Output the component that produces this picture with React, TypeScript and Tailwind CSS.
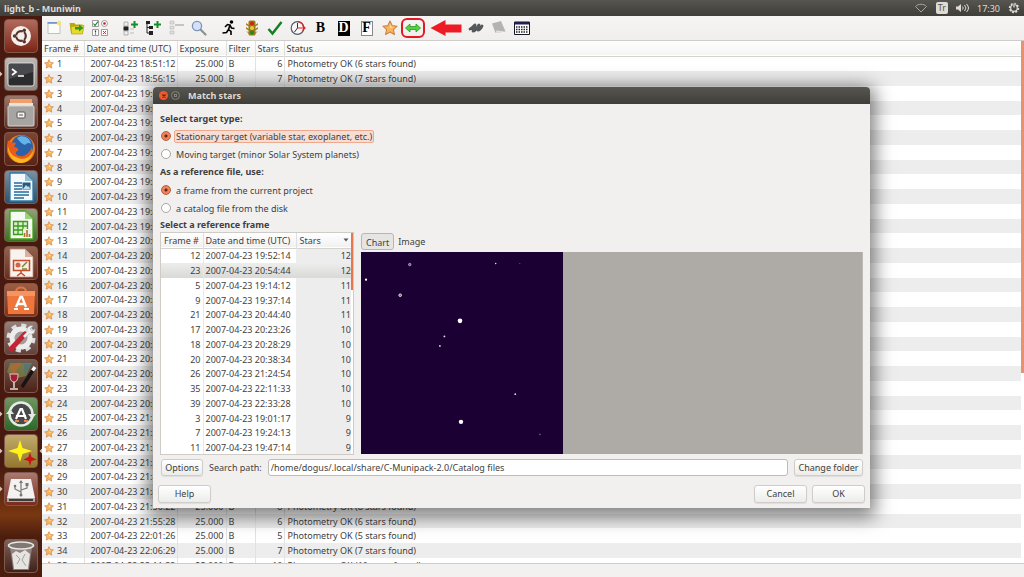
import type { ReactNode } from "react";

type Frame = [number, string, number];

const frames: Frame[] = [
  [1, "18:51:12", 6], [2, "18:56:15", 7], [3, "19:01:17", 9], [4, "19:09:08", 7],
  [5, "19:14:12", 11], [6, "19:19:12", 8], [7, "19:24:13", 9], [8, "19:32:10", 8],
  [9, "19:37:14", 11], [10, "19:42:12", 8], [11, "19:47:14", 9], [12, "19:52:14", 12],
  [13, "20:03:11", 8], [14, "20:08:14", 7], [15, "20:13:17", 8], [16, "20:18:22", 7],
  [17, "20:23:26", 10], [18, "20:28:29", 10], [19, "20:33:31", 8], [20, "20:38:34", 10],
  [21, "20:44:40", 11], [22, "20:49:42", 8], [23, "20:54:44", 12], [24, "20:59:48", 7],
  [25, "21:19:50", 8], [26, "21:24:54", 10], [27, "21:30:01", 7], [28, "21:35:06", 8],
  [29, "21:40:12", 6], [30, "21:45:18", 7], [31, "21:50:22", 8], [32, "21:55:28", 6],
  [33, "22:01:26", 5], [34, "22:06:29", 7], [35, "22:11:33", 10],
];

const references: Frame[] = [
  [12, "19:52:14", 12], [23, "20:54:44", 12], [5, "19:14:12", 11], [9, "19:37:14", 11],
  [21, "20:44:40", 11], [17, "20:23:26", 10], [18, "20:28:29", 10], [20, "20:38:34", 10],
  [26, "21:24:54", 10], [35, "22:11:33", 10], [39, "22:33:28", 10], [3, "19:01:17", 9],
  [7, "19:24:13", 9], [11, "19:47:14", 9],
];

const rowHeight = (i: number) => (i % 4 === 3 ? "h-[14px]" : "h-[15px]");

const STAR = "M8 1l2.1 4.6 5 .6-3.7 3.4 1 5L8 12.1 3.6 14.6l1-5L.9 6.2l5-.6z";

function Star({ className }: { className: string }) {
  return (
    <svg viewBox="0 0 16 16" className={className} aria-hidden="true">
      <path d={STAR} fill="#f9b45c" stroke="#cf8446" strokeWidth="1.1" strokeLinejoin="round" />
      <path d="M8 3.5l1.2 3 3 .5-4.2 1z" fill="#ffe0a8" />
    </svg>
  );
}

function Letter({ char, dark, boxed }: { char: string; dark?: boolean; boxed?: boolean }) {
  return (
    <span
      className={
        "flex h-[15px] w-3 items-center justify-center font-['Liberation_Serif',serif] text-[14px] leading-none font-bold " +
        (dark ? "bg-black text-white" : boxed ? "border border-[#888] bg-white text-black" : "text-black")
      }
    >
      {char}
    </span>
  );
}

function Icon({ children }: { children: ReactNode }) {
  return (
    <svg viewBox="0 0 16 16" className="size-4" aria-hidden="true">
      {children}
    </svg>
  );
}

const plus = <path d="M9 4.5h7M12.500 1v7" stroke="#139126" strokeWidth="2" />;

const groups: { name: string; icon: ReactNode; marked?: boolean }[][] = [
  [
    {
      name: "New project",
      icon: (
        <Icon>
          <path d="M2 2.500h12v11H2z" fill="#fbfbf8" stroke="#b4b4b0" strokeWidth=".8" />
          <path d="M1.500 2h10v1.800h-10z" fill="#7695c8" />
          <circle cx="13" cy="3" r="2.200" fill="#f3e36b" />
        </Icon>
      ),
    },
    {
      name: "Open project",
      icon: (
        <Icon>
          <path d="M.5 3h5l1 1.500h7V13H2z" fill="#b9a912" />
          <path d="M2 6.500l13-1L13.500 14H2.500z" fill="#e8da26" stroke="#a69812" strokeWidth=".6" />
          <path d="M6 7h4V4.500L14.500 8 10 11.500V9.500H6z" fill="#2d9a23" />
        </Icon>
      ),
    },
    {
      name: "Project settings",
      icon: (
        <Icon>
          <g fill="#fff" stroke="#777" strokeWidth=".7">
            <path d="M.5.5h6v6h-6zM.5 9.500h6v6h-6zM9.500 9.500h6v6h-6z" />
            <circle cx="12.500" cy="3.500" r="3" />
          </g>
          <path d="M1.500 3.500l1.500 2 3-4" fill="none" stroke="#16832a" strokeWidth="1.200" />
          <circle cx="12.500" cy="3.500" r="1.300" fill="#b22" />
          <path d="M3.500 10.500v2M3.500 13.500v1" stroke="#333" strokeWidth="1.200" />
          <path d="M11 11l3 3M14 11l-3 3" stroke="#c33" />
        </Icon>
      ),
    },
  ],
  [
    {
      name: "Add frames",
      icon: (
        <Icon>
          <path d="M2 2h4v4H2zM2 11h4v4H2z" fill="#eee" stroke="#999" strokeWidth=".7" />
          <path d="M1.500 6.500h5v4h-5z" fill="#222" />
          <path d="M8 9h4M8 13h4" stroke="#bbb" />
          {plus}
        </Icon>
      ),
    },
    {
      name: "Add folder",
      icon: (
        <Icon>
          <path d="M1 1h4v3H1zM4 6h4v3H4zM4 11h4v4H4z" fill="#222" />
          <path d="M2 4v9h3M2 7.500h3" stroke="#222" fill="none" />
          {plus}
        </Icon>
      ),
    },
    {
      name: "Remove frames",
      icon: (
        <Icon>
          <path d="M2 1h4v3H2zM2 6h4v3H2zM2 11h4v3H2z" fill="#ddd" stroke="#bbb" strokeWidth=".6" />
          <path d="M7 5h9" stroke="#b8b8b8" strokeWidth="1.600" />
        </Icon>
      ),
    },
    {
      name: "Preview",
      icon: (
        <Icon>
          <path d="M9.500 9.500l5 5" stroke="#8e8e96" strokeWidth="2.200" strokeLinecap="round" />
          <circle cx="6" cy="6" r="4.600" fill="#d3e2f8" stroke="#7f92b8" strokeWidth="1.300" />
        </Icon>
      ),
    },
  ],
  [
    {
      name: "Express reduction",
      icon: (
        <Icon>
          <circle cx="10.500" cy="2" r="1.800" />
          <path d="M4 7l2.500-2.500L9 5 7.500 9.500l2.500 2V15M7.500 9.500L5.500 12.500 1.500 13M9 5l1.500 3 3 .5" fill="none" stroke="#000" strokeWidth="1.600" />
        </Icon>
      ),
    },
    {
      name: "Fetch files",
      icon: (
        <Icon>
          <path d="M2 3l3 2v1.500L2 5zM14 3l-3 2v1.500L14 5zM2 7l3 2v1.500L2 9zM14 7l-3 2v1.500L14 9zM2 11l3 1.500V14zM14 11l-3 1.500V14z" fill="#a28226" />
          <rect x="4.500" y=".5" width="7" height="15" rx="1.500" fill="#9a7b1c" />
          <circle cx="8" cy="3.500" r="2" fill="#d3221c" />
          <circle cx="8" cy="8" r="2" fill="#ebd028" />
          <circle cx="8" cy="12.500" r="2" fill="#1d8a28" />
        </Icon>
      ),
    },
    {
      name: "Convert",
      icon: (
        <Icon>
          <path d="M1.500 9l4 4.500L14.500 2" fill="none" stroke="#158023" strokeWidth="2.500" />
        </Icon>
      ),
    },
    {
      name: "Time correction",
      icon: (
        <Icon>
          <circle cx="7.500" cy="8" r="6.300" fill="#f7f7fa" stroke="#555b68" strokeWidth="1.200" />
          <path d="M7.500 1.700A6.300 6.300 0 0113.800 8" fill="none" stroke="#c33" strokeWidth="1.200" />
          <path d="M7.500 3v5l-3 4" fill="none" stroke="#333" />
          <path d="M7.500 8H15M12.500 5.500L15 8l-2.500 2.500" fill="none" stroke="#d22" strokeWidth="1.200" />
        </Icon>
      ),
    },
    { name: "Bias correction", icon: <Letter char="B" /> },
    { name: "Dark correction", icon: <Letter char="D" dark /> },
    { name: "Flat correction", icon: <Letter char="F" boxed /> },
    { name: "Photometry", icon: <Star className="size-4" /> },
    {
      name: "Match stars",
      marked: true,
      icon: (
        <Icon>
          <path d="M.5 8L5 4v2.500h6V4l4.500 4L11 12V9.500H5V12z" fill="#56d046" stroke="#229a20" strokeWidth=".8" />
        </Icon>
      ),
    },
  ],
  [
    {
      name: "Light curve",
      icon: (
        <Icon>
          <path d="M2 9c3-1 4-4 5-4 0 2-3 4-2 6 3 0 4-4 6-6 0 2-2 3-1 5 2 0 3-2 4-4" fill="none" stroke="#55575a" strokeWidth="2.800" strokeLinecap="round" strokeLinejoin="round" />
        </Icon>
      ),
    },
    {
      name: "Merge frames",
      icon: (
        <Icon>
          <path d="M1 3.500L10 1l4.500 10.500L4.500 13z" fill="#b3b3b3" />
          <path d="M4.500 13l1-2.500 9 1z" fill="#e2e2e2" />
        </Icon>
      ),
    },
    {
      name: "Frame list",
      icon: (
        <Icon>
          <path d="M.5 2h15v12.500H.5z" fill="#fff" stroke="#15152b" />
          <path d="M.5 2h15v2.500H.5z" fill="#202050" />
          <path d="M2 7h12M2 9.500h12M2 12h12" stroke="#222" strokeWidth="1.400" strokeDasharray="1.500 1" />
        </Icon>
      ),
    },
  ],
];

const doc = "M6 3h15l8 8v20H6z";

type LauncherItem = { name: string; tile: string; art: ReactNode; running?: boolean };

const apps: LauncherItem[] = [
  {
    name: "Dash",
    tile: "from-[#b06a5c] to-[#7b2415]",
    art: (
      <>
        <circle cx="17" cy="17" r="10" fill="#f6efeb" />
        <circle cx="17" cy="17" r="4.800" fill="none" stroke="#57322a" strokeWidth="2.200" />
        <path d="M17 17h-8M17 17l4-7M17 17l4 7" stroke="#f6efeb" strokeWidth="1.200" />
        <circle cx="10.500" cy="17" r="1.700" fill="#57322a" />
        <circle cx="20.300" cy="11.300" r="1.700" fill="#57322a" />
        <circle cx="20.300" cy="22.700" r="1.700" fill="#57322a" />
      </>
    ),
  },
  {
    name: "Terminal",
    tile: "from-[#bdb9b6] to-[#8f8985]",
    running: true,
    art: (
      <>
        <rect x="4" y="6" width="26" height="23" rx="2" fill="#2c2c2e" stroke="#e1dfdc" />
        <path d="M5 7h24v8L5 22z" fill="#48494c" />
        <path d="M8 12l4 3-4 3M14 19h6" fill="none" stroke="#fff" strokeWidth="1.700" />
      </>
    ),
  },
  {
    name: "Files",
    tile: "from-[#9a776c] to-[#5c3128]",
    art: (
      <>
        <path d="M6 4h22v8H6z" fill="#f0a06c" />
        <path d="M5 8h24v3H5z" fill="#ece3dc" />
        <rect x="4" y="11" width="26" height="20" rx="1" fill="#a7a5a1" stroke="#d4d2ce" />
        <rect x="13" y="17" width="8" height="6" rx="1" fill="#f3f3f1" stroke="#555" />
        <path d="M15 20h4" stroke="#555" />
      </>
    ),
  },
  {
    name: "Firefox",
    tile: "from-[#7e4432] to-[#5a2417]",
    art: (
      <>
        <circle cx="17" cy="17" r="14" fill="#ef7d1a" />
        <circle cx="18" cy="14.500" r="11" fill="#2b62a8" />
        <path d="M13 6c5-4 13-1 14 6-2-2-4-1-6 1-3-1-5-3-8-7z" fill="#63b2e8" />
        <path d="M4 8c2 3 5 2 8 3l-2 4c3 0 5 2 4 4-2 0-3 2-1 4 5 3 12 0 15-8 1 10-6 16-13 15C6 29 1 20 4 8z" fill="#e95b16" />
        <path d="M4 14c1 5 3 9 8 11 7 4 14 1 17-6-1 8-6 12-13 12C9 30 3 23 4 14z" fill="#fbb620" />
      </>
    ),
  },
  {
    name: "LibreOffice Writer",
    tile: "from-[#7892a2] to-[#305268]",
    art: (
      <>
        <path d={doc} fill="#f6f9fb" stroke="#2c78a8" strokeWidth="1.300" />
        <path d="M21 3v8h8z" fill="#95bdd3" />
        <path d="M10 13h8M10 16h8M10 19h8M10 22h15M10 25h15M10 28h10" stroke="#226b9d" strokeWidth="1.500" />
        <path d="M18.500 12.500h8v7h-8z" fill="#235b83" />
        <path d="M19 19l3-4 2 2 1-1 1 3z" fill="#c1dced" />
      </>
    ),
  },
  {
    name: "LibreOffice Calc",
    tile: "from-[#93a078] to-[#3c7022]",
    art: (
      <>
        <path d={doc} fill="#f5faf2" stroke="#43a01c" strokeWidth="1.300" />
        <path d="M21 3v8h8z" fill="#9fd07f" />
        <path d="M9.500 13.500h14v13h-14zM9.500 18h14M9.500 22h14M14 13.500v13M19 13.500v13" fill="#d8efcb" stroke="#3b9a1c" strokeWidth="1.300" />
        <path d="M19 21h8v8h-8z" fill="#eee" />
        <path d="M20.500 29v-4M23 29v-7M25.500 29v-3" stroke="#b47024" strokeWidth="1.600" />
      </>
    ),
  },
  {
    name: "LibreOffice Impress",
    tile: "from-[#926150] to-[#6a2c1d]",
    art: (
      <>
        <path d={doc} fill="#f8f3ef" stroke="#ba8c78" strokeWidth=".8" />
        <path d="M21 3v8h8z" fill="#d7b2a2" />
        <path d="M9.500 14.500h16v10h-16zM17 24.500v3M13 30l4-3 4 3" fill="#faece4" stroke="#c34c2a" strokeWidth="1.500" />
        <circle cx="14" cy="19" r="2.500" fill="#cf6648" />
        <path d="M18 21l5-5M18 23h5" stroke="#768a38" strokeWidth="1.500" />
      </>
    ),
  },
  {
    name: "Software Center",
    tile: "from-[#9a5d43] to-[#823212]",
    art: (
      <>
        <path d="M12 9c0-6 10-6 10 0" fill="none" stroke="#e27641" strokeWidth="2" />
        <path d="M3 8h28l-1 23H4z" fill="#ee753c" />
        <path d="M3 8h28v5H3z" fill="#f59361" />
        <path d="M12 24l4.500-10h1.500L22 24M13 21h8" fill="none" stroke="#fff" strokeWidth="2.300" />
        <path d="M10 26h4M20 26h5" stroke="#fff" strokeWidth="2" />
      </>
    ),
  },
  {
    name: "System Settings",
    tile: "from-[#94807b] to-[#61413b]",
    art: (
      <>
        <circle cx="17" cy="17" r="12.500" fill="none" stroke="#dededd" strokeWidth="4" strokeDasharray="5 4.800" />
        <circle cx="17" cy="17" r="9" fill="#a49c9a" stroke="#ececeb" strokeWidth="5" />
        <path d="M7 28L21 13" stroke="#c42532" strokeWidth="5" strokeLinecap="round" />
        <path d="M19 15l4-4c-1-4 2-7 6-6l-3 3 2 2 3-2c0 4-3 6-6 5l-4 4z" fill="#ededed" stroke="#aaa" strokeWidth=".5" />
      </>
    ),
  },
  {
    name: "Wine",
    tile: "from-[#705c50] to-[#4c2118]",
    art: (
      <>
        <path d="M6 4h22l-6 13-13 3-6-7z" fill="#829447" opacity=".6" />
        <path d="M5 9c6-6 11-6 12-4l-7 10z" fill="#c66332" opacity=".6" />
        <path d="M20 5h8l-8 11z" fill="#39749d" opacity=".5" />
        <path d="M18 28L31 8" stroke="#191414" strokeWidth="3.500" />
        <path d="M28.500 11.500L31 8" stroke="#fff" strokeWidth="3.500" />
        <path d="M6 15h8c0 5-1 8-4 8s-4-3-4-8z" fill="#a51e31" stroke="#e1cbc7" />
        <path d="M10 23v6M6 30h8" stroke="#e5d5d1" strokeWidth="1.500" />
      </>
    ),
  },
  {
    name: "Software Updater",
    tile: "from-[#709462] to-[#286a28]",
    running: true,
    art: (
      <>
        <circle cx="17" cy="17" r="11.500" fill="#47494a" stroke="#e5ebe2" strokeWidth="2.500" />
        <path d="M2 17l4-5 4 5zM24 17l4 5 4-5z" fill="#e5ebe2" />
        <path d="M12 22l4.500-10h1.500L22 22M12 19h10" fill="none" stroke="#fff" strokeWidth="2.200" />
        <path d="M11 24h4M20 24h4" stroke="#ef8248" strokeWidth="2" />
      </>
    ),
  },
  {
    name: "Muniwin",
    tile: "from-[#c1aa6b] to-[#94782f]",
    running: true,
    art: (
      <>
        <path d="M16 6l2.500 8L28 17l-9.500 3L16 28l-2.500-8L4 17l9.500-3z" fill="#fff318" />
        <path d="M26 18l1.500 5 5 2.500-5 1.500-1.500 5-1.500-5-5-1.500 5-2.500z" fill="#c81513" />
      </>
    ),
  },
  {
    name: "USB drive",
    tile: "from-[#a87970] to-[#7a2a1c]",
    running: true,
    art: (
      <>
        <path d="M7 7h20l4 19H3z" fill="#f3f2f0" />
        <path d="M3 26h28v4H3z" fill="#aaa7a4" />
        <path d="M5 28h24" stroke="#3c3c3c" strokeWidth="2" />
        <path d="M17 10v13M11 14v3l6 3M23 13v3l-6 2" fill="none" stroke="#777" strokeWidth="1.200" />
        <circle cx="11" cy="14" r="1.300" fill="#777" />
        <path d="M15 11l2-3 2 3zM21.500 11h3v3h-3z" fill="#777" />
        <circle cx="17" cy="23" r="1.500" fill="#777" />
      </>
    ),
  },
];

function LauncherButton({ name, tile, art, running }: LauncherItem) {
  return (
    <button type="button" aria-label={name} className="flex w-full items-center">
      <svg viewBox="0 0 4 8" className="h-2 w-1" aria-hidden="true">
        {running && <path d="M0 1.500L2.500 4 0 6.500z" fill="#d9c4bb" />}
      </svg>
      <span className={"flex size-[34px] rounded-sm border border-[#80594e] bg-linear-to-b " + tile}>
        <svg viewBox="1 1 32 32" className="size-8" aria-hidden="true">
          {art}
        </svg>
      </span>
      <svg viewBox="0 0 4 8" className="h-2 w-1" aria-hidden="true">
        {name === "Muniwin" && <path d="M4 1.500L1.500 4 4 6.500z" fill="#d9c4bb" />}
      </svg>
    </button>
  );
}

function Radio({ name, label, checked, focused }: { name: string; label: string; checked?: boolean; focused?: boolean }) {
  return (
    <label className="flex h-[18px] items-center gap-[2px]">
      <input
        type="radio"
        name={name}
        defaultChecked={checked}
        className="m-px size-[10px] appearance-none rounded-full border border-[#a9a6a2] bg-white checked:border-[#b55d3d] checked:bg-[radial-gradient(circle,#5b2a1c_0_1px,#ee8259_2px)]"
      />
      <span className={"rounded-xs border px-px leading-[11px] " + (focused ? "border-[#eda98e] bg-[#f5ddd3]" : "border-transparent")}>
        {label}
      </span>
    </label>
  );
}

const button =
  "rounded-[3px] border border-[#cfccc9] bg-linear-to-b from-white to-[#ececea] text-center leading-[14px] shadow-[0_1px_1px_#00000014]";

function MatchDialog() {
  return (
    <section
      role="dialog"
      aria-label="Match stars"
      className="absolute top-[87px] right-[154px] left-[153px] rounded-t bg-[#f1f0ef] shadow-[0_4px_18px_5px_#00000080]"
    >
      <header className="flex h-[17px] items-center gap-[3px] rounded-t bg-linear-to-b from-[#575650] to-[#3f3e39] pl-[6px] text-[#dfdbd2]">
        <button type="button" aria-label="Close" className="flex size-[9px] items-center justify-center rounded-full bg-[#ec5a2e]">
          <svg viewBox="0 0 8 8" className="size-2" aria-hidden="true">
            <path d="M2.500 2.500l3 3M5.500 2.500l-3 3" stroke="#5c2110" strokeWidth="1.200" />
          </svg>
        </button>
        <button type="button" aria-label="Maximize" className="flex size-[9px] items-center justify-center rounded-full border border-[#85837b]">
          <span className="size-[3px] border border-[#85837b]" />
        </button>
        <h1 className="pl-[5px] font-bold">Match stars</h1>
      </header>
      <div className="px-[7px] pt-[6px]">
        <h2 className="h-[17px] leading-[17px] font-bold">Select target type:</h2>
        <Radio name="target" label="Stationary target (variable star, exoplanet, etc.)" checked focused />
        <Radio name="target" label="Moving target (minor Solar System planets)" />
        <h2 className="h-[18px] leading-[18px] font-bold">As a reference file, use:</h2>
        <Radio name="source" label="a frame from the current project" checked />
        <Radio name="source" label="a catalog file from the disk" />
        <h2 className="h-[15px] leading-[15px] font-bold">Select a reference frame</h2>
        <div className="flex gap-[7px]">
          <div className="flex h-[223px] w-[194px] overflow-hidden border border-[#cfccc8] bg-white">
            <table className="flex-1 table-fixed border-collapse self-start">
              <colgroup>
                <col className="w-[42px]" />
                <col className="w-[93px]" />
                <col />
              </colgroup>
              <thead>
                <tr className="h-[15px] border-b border-[#d5d3d0] bg-linear-to-b from-white to-[#f1f1f0] text-left">
                  <th className="border-r border-[#e2e0de] p-0 pl-[3px] font-normal">Frame #</th>
                  <th className="border-r border-[#e2e0de] p-0 pl-[2px] font-normal">Date and time (UTC)</th>
                  <th className="p-0 pl-[3px] font-normal" aria-sort="descending">
                    <span className="flex items-center justify-between pr-[2px]">
                      Stars
                      <svg viewBox="0 0 6 4" className="h-1 w-[6px]" aria-hidden="true">
                        <path d="M.5.5h5L3 3.500z" fill="#555" />
                      </svg>
                    </span>
                  </th>
                </tr>
              </thead>
              <tbody>
                {references.map(([id, time, stars], i) => (
                  <tr key={id} className={rowHeight(i) + (id === 23 ? " bg-linear-to-b from-[#ededeb] to-[#d9d9d7]" : "")}>
                    <td className="border-r border-[#e8e8e8] p-0 pr-[2px] text-right">{id}</td>
                    <td className="p-0 pl-[2px]">2007-04-23 {time}</td>
                    <td className={"p-0 text-right " + (id === 23 ? "" : "bg-[#ededed]")}>{stars}</td>
                  </tr>
                ))}
              </tbody>
            </table>
            <div className="h-[57px] w-[2px] bg-[#e8764c]" />
          </div>
          <div className="flex min-w-0 flex-1 flex-col">
            <div role="tablist" className="flex h-5 items-start gap-1 pt-px">
              <button type="button" role="tab" aria-selected="true" className="h-[17px] rounded-[3px] border border-[#b9b6b2] bg-[#e7e5e3] px-1 leading-[17px]">
                Chart
              </button>
              <button type="button" role="tab" aria-selected="false" className="h-[17px] leading-[18px]">
                Image
              </button>
            </div>
            <div className="mb-px flex flex-1 border-r border-[#bdb9b5] bg-[#aeaaa6]">
              <svg viewBox="0 0 201 201" className="size-[202px]" role="img" aria-label="Star chart">
                <path d="M0 0h201v201H0z" fill="#1a0033" />
                <circle cx="98.500" cy="68.500" r="2.300" fill="#fff" />
                <circle cx="99.500" cy="169" r="2.200" fill="#fff" />
                <circle cx="48.500" cy="12.500" r="1.200" fill="#6a5a88" stroke="#cfc8dc" strokeWidth=".7" />
                <circle cx="39" cy="43" r="1.300" fill="#6a5a88" stroke="#fff" strokeWidth=".8" />
                <circle cx="5" cy="27.500" r="1.100" fill="#fff" />
                <g fill="#e1dbea">
                  <circle cx="134" cy="11.500" r=".8" />
                  <circle cx="83" cy="84" r=".9" />
                  <circle cx="78.500" cy="93.500" r=".9" />
                  <circle cx="153.500" cy="141.500" r=".9" />
                </g>
                <circle cx="158" cy="11.500" r=".6" fill="#6e5a88" />
                <circle cx="178" cy="181.500" r=".8" fill="#6e5a88" />
              </svg>
            </div>
          </div>
        </div>
        <div className="mt-1 flex h-[17px] items-stretch gap-[6px] pl-px">
          <button type="button" className={button + " w-[42px]"}>Options</button>
          <label htmlFor="path" className="self-center">Search path:</label>
          <input
            id="path"
            defaultValue="/home/dogus/.local/share/C-Munipack-2.0/Catalog files"
            className="min-w-0 flex-1 rounded-[3px] border border-[#bfbbb7] bg-white px-[2px]"
          />
          <button type="button" className={button + " w-[69px] whitespace-nowrap"}>Change folder</button>
        </div>
      </div>
      <footer className="flex gap-[5px] px-[5px] pt-[9px] pb-[5px]">
        <button type="button" className={button + " mr-auto h-[18px] w-[53px]"}>Help</button>
        <button type="button" className={button + " h-[18px] w-[53px]"}>Cancel</button>
        <button type="button" className={button + " h-[18px] w-[53px]"}>OK</button>
      </footer>
    </section>
  );
}

export default function App() {
  return (
    <div className="relative flex h-screen flex-col overflow-hidden bg-[#f2f1f0] font-['Noto_Sans',sans-serif] text-[9px] leading-[13px] text-[#3f3f3f]">
      <header className="flex h-4 shrink-0 items-center bg-linear-to-b from-[#56554f] to-[#3f3e39] px-1 text-[#dfdbd2]">
        <h1 className="font-bold">light_b - Muniwin</h1>
        <div className="ml-auto flex items-center gap-2">
          <svg viewBox="0 0 14 10" className="h-[10px] w-[14px]" aria-hidden="true">
            <path d="M1.500 3.500C4 .5 10 .5 12.500 3.500L7 9z" fill="none" stroke="#a9a69e" />
          </svg>
          <span className="rounded-xs bg-[#dfdbd2] px-[2px] leading-3 text-[#55534d]">Tr</span>
          <svg viewBox="0 0 13 10" className="h-[10px] w-[13px]" aria-hidden="true">
            <path d="M0 3.500h2L5 1v8L2 6.500H0z" fill="#dfdbd2" />
            <path d="M6.500 3.500q1.500 1.500 0 3M8.500 2q3 3 0 6M10.500 1q4 4 0 8" fill="none" stroke="#dfdbd2" />
          </svg>
          <time>17:30</time>
          <svg viewBox="0 0 12 12" className="size-3" aria-hidden="true">
            <circle cx="6" cy="6" r="4.300" fill="none" stroke="#dfdbd2" strokeWidth="1.800" strokeDasharray="1.900 1.400" />
            <circle cx="6" cy="6" r="3.300" fill="none" stroke="#dfdbd2" strokeWidth="1.200" />
            <path d="M6 1.500v4" stroke="#45443f" strokeWidth="2.500" />
            <path d="M6 1.500v4" stroke="#dfdbd2" strokeWidth="1.300" />
          </svg>
        </div>
      </header>
      <div className="flex min-h-0 flex-1">
        <nav aria-label="Launcher" className="flex w-[42px] shrink-0 flex-col justify-between bg-linear-to-b from-[#47190f] from-80% via-[#78370f] via-89% to-[#4b1d0e] to-93% pt-[3px] pb-1">
          <div className="flex h-[487px] flex-col justify-between">
            {apps.map((app) => (
              <LauncherButton key={app.name} {...app} />
            ))}
          </div>
          <LauncherButton
            name="Trash"
            tile="from-[#7d6259] to-[#40211a]"
            art={
              <>
                <path d="M6 8h22l-3 23H9z" fill="#aaa39e" opacity=".65" />
                <path d="M8 15l4-3 4 2 5-3 5 4-2 15H10z" fill="#e6e4e1" />
                <path d="M12 16l4 4-3 5M21 15l-3 6 4 6" fill="none" stroke="#a5a19d" />
                <ellipse cx="17" cy="6.500" rx="12.500" ry="3.500" fill="#807873" stroke="#e9e6e3" strokeWidth="1.600" />
              </>
            }
          />
        </nav>
        <main className="flex min-w-0 flex-1 flex-col">
          <div role="toolbar" className="flex h-6 shrink-0 items-center bg-linear-to-b from-[#f6f5f4] to-[#efeeec]">
            {groups.map((group, g) => (
              <div key={g} className="flex items-center">
                {(g === 1 || g === 2) && <span className="w-[7px]" />}
                {g === 3 && (
                  <svg viewBox="0 0 38 16" className="h-4 w-[39px]" aria-hidden="true">
                    <path d="M5 8L20 0v4.500h16v8H20V16z" fill="#ed1c24" />
                  </svg>
                )}
                {group.map((tool) => (
                  <button
                    key={tool.name}
                    type="button"
                    aria-label={tool.name}
                    className={
                      "flex h-5 items-center justify-center " +
                      (tool.marked ? "w-6 rounded-md border-2 border-[#e01b24]" : "w-[23px]")
                    }
                  >
                    {tool.icon}
                  </button>
                ))}
              </div>
            ))}
          </div>
          <div className="flex min-h-0 flex-1 overflow-hidden border-y border-[#cfccc9] bg-white">
            <table className="flex-1 table-fixed border-collapse self-start whitespace-nowrap">
              <colgroup>
                <col className="w-[42px]" />
                <col className="w-[93px]" />
                <col className="w-[49px]" />
                <col className="w-[29px]" />
                <col className="w-[29px]" />
                <col />
              </colgroup>
              <thead>
                <tr className="h-[15px] border-b border-[#d5d3d0] bg-linear-to-b from-white to-[#f4f4f3] text-left">
                  {["Frame #", "Date and time (UTC)", "Exposure", "Filter", "Stars", "Status"].map((title) => (
                    <th key={title} className="border-r border-[#e2e0de] p-0 pl-[2px] font-normal last:border-0">
                      {title}
                    </th>
                  ))}
                </tr>
              </thead>
              <tbody>
                {frames.map(([id, time, stars], i) => (
                  <tr key={id} className={rowHeight(i) + (i % 2 ? " bg-[#ededed]" : "")}>
                    <td className="border-r border-[#dedede] p-0 pl-[2px]">
                      <span className="flex items-center gap-[3px]">
                        <Star className="size-[10px]" />
                        {id}
                      </span>
                    </td>
                    <td className="border-r border-[#e2e2e2] p-0 pr-px text-right">2007-04-23 {time}</td>
                    <td className="border-r border-[#e2e2e2] p-0 pr-[2px] text-right">25.000</td>
                    <td className="border-r border-[#e2e2e2] p-0 pl-[2px]">B</td>
                    <td className="border-r border-[#e2e2e2] p-0 pr-px text-right">{stars}</td>
                    <td className="p-0 pl-[3px]">Photometry OK ({stars} stars found)</td>
                  </tr>
                ))}
              </tbody>
            </table>
            <div className="h-[332px] w-[3px] bg-[#e8916f]" />
          </div>
          <div role="status" className="h-[13px] shrink-0" />
        </main>
      </div>
      <MatchDialog />
    </div>
  );
}
